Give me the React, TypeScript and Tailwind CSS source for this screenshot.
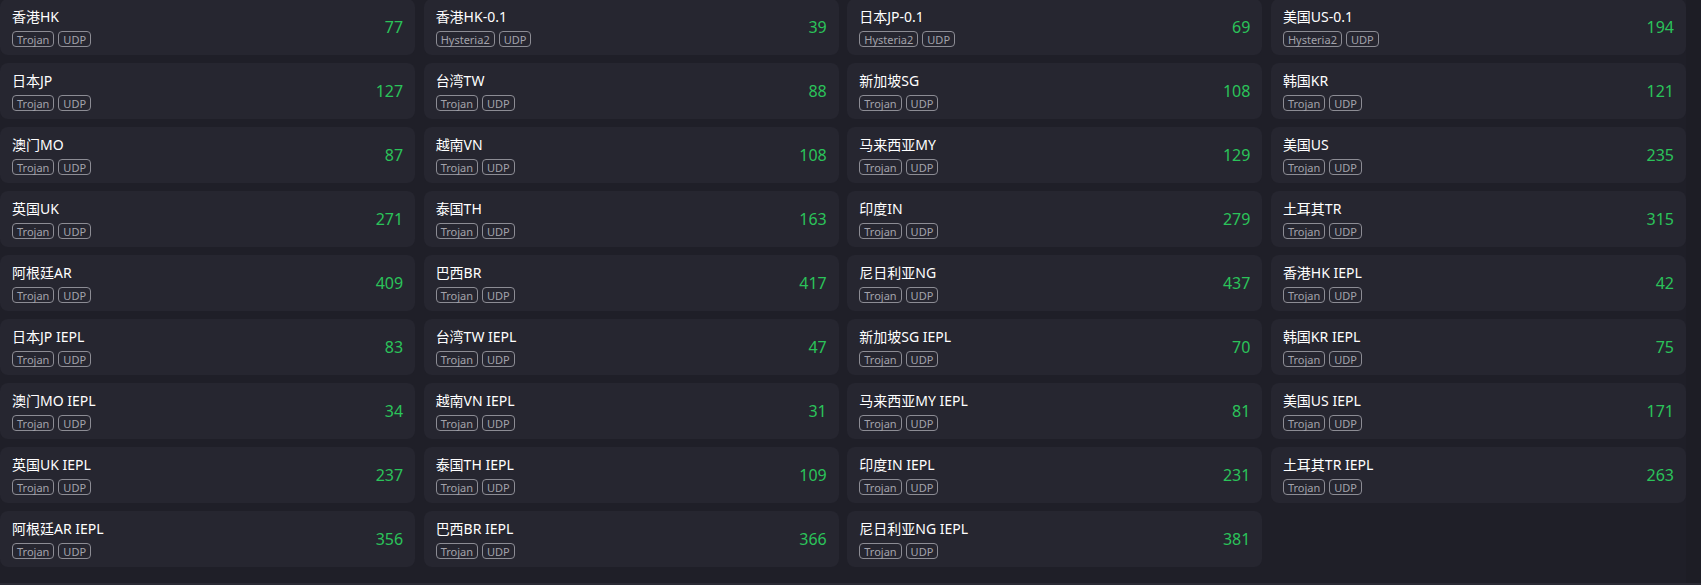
const NODES: { name: string; proto: string; delay: number }[] = [
  { name: "香港HK", proto: "Trojan", delay: 77 },
  { name: "香港HK-0.1", proto: "Hysteria2", delay: 39 },
  { name: "日本JP-0.1", proto: "Hysteria2", delay: 69 },
  { name: "美国US-0.1", proto: "Hysteria2", delay: 194 },
  { name: "日本JP", proto: "Trojan", delay: 127 },
  { name: "台湾TW", proto: "Trojan", delay: 88 },
  { name: "新加坡SG", proto: "Trojan", delay: 108 },
  { name: "韩国KR", proto: "Trojan", delay: 121 },
  { name: "澳门MO", proto: "Trojan", delay: 87 },
  { name: "越南VN", proto: "Trojan", delay: 108 },
  { name: "马来西亚MY", proto: "Trojan", delay: 129 },
  { name: "美国US", proto: "Trojan", delay: 235 },
  { name: "英国UK", proto: "Trojan", delay: 271 },
  { name: "泰国TH", proto: "Trojan", delay: 163 },
  { name: "印度IN", proto: "Trojan", delay: 279 },
  { name: "土耳其TR", proto: "Trojan", delay: 315 },
  { name: "阿根廷AR", proto: "Trojan", delay: 409 },
  { name: "巴西BR", proto: "Trojan", delay: 417 },
  { name: "尼日利亚NG", proto: "Trojan", delay: 437 },
  { name: "香港HK IEPL", proto: "Trojan", delay: 42 },
  { name: "日本JP IEPL", proto: "Trojan", delay: 83 },
  { name: "台湾TW IEPL", proto: "Trojan", delay: 47 },
  { name: "新加坡SG IEPL", proto: "Trojan", delay: 70 },
  { name: "韩国KR IEPL", proto: "Trojan", delay: 75 },
  { name: "澳门MO IEPL", proto: "Trojan", delay: 34 },
  { name: "越南VN IEPL", proto: "Trojan", delay: 31 },
  { name: "马来西亚MY IEPL", proto: "Trojan", delay: 81 },
  { name: "美国US IEPL", proto: "Trojan", delay: 171 },
  { name: "英国UK IEPL", proto: "Trojan", delay: 237 },
  { name: "泰国TH IEPL", proto: "Trojan", delay: 109 },
  { name: "印度IN IEPL", proto: "Trojan", delay: 231 },
  { name: "土耳其TR IEPL", proto: "Trojan", delay: 263 },
  { name: "阿根廷AR IEPL", proto: "Trojan", delay: 356 },
  { name: "巴西BR IEPL", proto: "Trojan", delay: 366 },
  { name: "尼日利亚NG IEPL", proto: "Trojan", delay: 381 },
];

function Tag({ label }: { label: string }) {
  return (
    <span className="h-4 px-1 flex items-center rounded-[4px] border border-[#8c8c94] text-[11px] leading-none text-[#a3a3ab]">
      {label}
    </span>
  );
}

function NodeCard({ name, proto, delay }: { name: string; proto: string; delay: number }) {
  return (
    <div className="h-14 rounded-lg bg-[#262630] pl-3 pr-3 flex items-center justify-between">
      <div className="flex flex-col gap-[5px] pt-[1px]">
        <span className="text-[14px] leading-[18px] text-white">{name}</span>
        <div className="flex gap-1">
          <Tag label={proto} />
          <Tag label="UDP" />
        </div>
      </div>
      <span className="text-[16px] text-[#2bc35a]">{delay}</span>
    </div>
  );
}

export default function App() {
  return (
    <div
      className="h-[585px] w-[1701px] overflow-hidden bg-[#1f1f28] flex flex-col"
      style={{ fontFamily: '"Noto Sans", "Noto Sans CJK SC", sans-serif' }}
    >
      <div className="flex-1 flex overflow-hidden">
        {/* Node grid */}
        <div className="w-[1686px] -mt-px grid grid-cols-4 gap-x-[8.5px] gap-y-2 content-start">
          {NODES.map((n) => (
            <NodeCard key={n.name} {...n} />
          ))}
        </div>
        <div className="flex-1 bg-[#1d1d25]" />
      </div>
      <div className="h-[2px] bg-[#2a2a34]" />
    </div>
  );
}
